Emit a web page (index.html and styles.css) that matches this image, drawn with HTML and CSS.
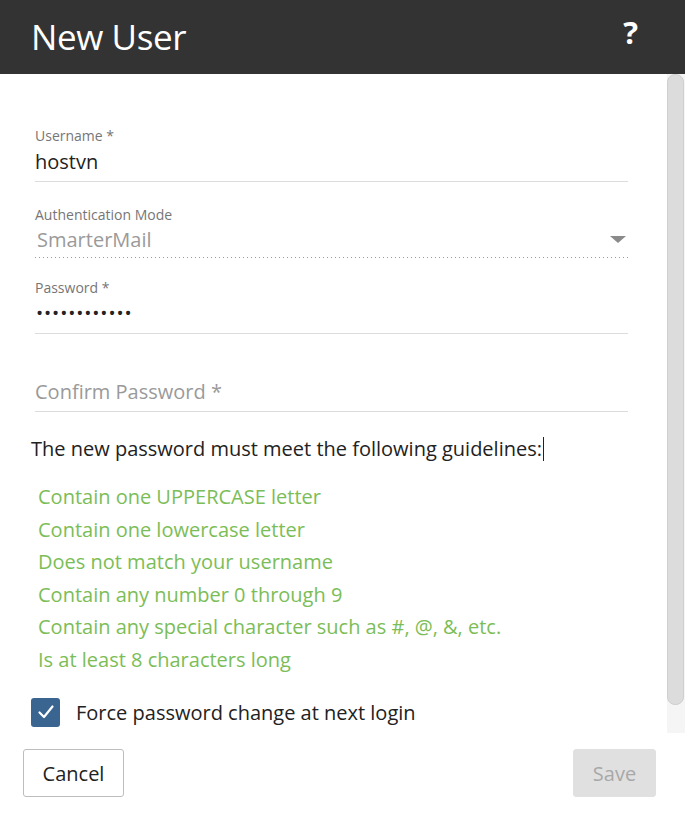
FILE: index.html
```html
<!DOCTYPE html>
<html>
<head>
<meta charset="utf-8">
<link rel="stylesheet" href="styles.css">
</head>
<body>
<div class="modal">
  <header class="modal-header">
    <h1 class="title">New User</h1>
    <span class="help">?</span>
  </header>
  <div class="modal-body">
    <div class="content">
      <div class="field f-user">
        <div class="label">Username *</div>
        <div class="input">hostvn</div>
      </div>
      <div class="field f-auth">
        <div class="label">Authentication Mode</div>
        <div class="select">
          <span class="select-value">SmarterMail</span>
          <span class="caret"></span>
        </div>
      </div>
      <div class="field f-pass">
        <div class="label">Password *</div>
        <div class="input dots">••••••••••••</div>
      </div>
      <div class="field f-confirm">
        <div class="label"></div>
        <div class="input placeholder">Confirm Password *</div>
      </div>
      <p class="guide">The new password must meet the following guidelines:<span class="cursor"></span></p>
      <ul class="rules">
        <li>Contain one UPPERCASE letter</li>
        <li>Contain one lowercase letter</li>
        <li>Does not match your username</li>
        <li>Contain any number 0 through 9</li>
        <li>Contain any special character such as #, @, &amp;, etc.</li>
        <li>Is at least 8 characters long</li>
      </ul>
      <label class="check-row">
        <span class="checkbox">
          <svg width="20" height="20" viewBox="0 0 20 20"><path d="M3.5 10.5 L8 15 L16.5 4.5" fill="none" stroke="#fff" stroke-width="2.2" stroke-linecap="round" stroke-linejoin="round"/></svg>
        </span>
        <span class="check-label">Force password change at next login</span>
      </label>
    </div>
    <div class="scrollbar"><div class="thumb"></div></div>
  </div>
  <footer class="modal-footer">
    <button class="btn btn-cancel">Cancel</button>
    <button class="btn btn-save">Save</button>
  </footer>
</div>
</body>
</html>
```

FILE: styles.css
```css
* { box-sizing: border-box; }
html, body { margin: 0; padding: 0; background: #fff; }
body { font-family: "Open Sans", "Noto Sans", sans-serif; color: #222; }

.modal { width: 685px; height: 822px; display: flex; flex-direction: column; }

.modal-header {
  height: 74px; background: #333333; color: #fff;
  display: flex; align-items: center; justify-content: space-between;
  padding: 0 47px 0 31px;
}
.title { margin: 0; font-weight: 400; font-size: 35px; letter-spacing: -0.4px; margin-top: -1px; }
.help { font-size: 31px; font-weight: 700; margin-top: -10px; }

.modal-body { height: 659px; display: flex; }
.content { flex: 1; padding: 51px 39px 0 35px; }
.scrollbar { width: 18px; background: #f5f5f5; padding-right: 1px; }
.thumb { height: 631px; background: #dcdcdc; border: 1px solid #cfcfcf; border-radius: 8px; }

.label { font-size: 14px; line-height: 22px; height: 18px; color: #767676; }
.input { font-size: 20px; height: 39px; line-height: 38px; border-bottom: 1px solid #dcdcdc; color: #222; }
.dots { font-size: 19px; letter-spacing: 0.9px; padding-left: 1px; line-height: 36px; }
.placeholder { color: #9a9a9a; }
.f-auth { margin-top: 22px; }
.f-pass { margin-top: 19px; }
.f-confirm { margin-top: 21px; }

.select {
  height: 36px; display: flex; align-items: center; justify-content: space-between;
  padding: 0 2px 2px 2px;
  background-image: repeating-linear-gradient(to right, #9a9a9a 0 1.5px, transparent 1.5px 4px);
  background-size: 100% 1px; background-repeat: no-repeat; background-position: left bottom;
}
.select-value { font-size: 20px; color: #9a9a9a; }
.caret { width: 0; height: 0; border-left: 8px solid transparent; border-right: 8px solid transparent; border-top: 7px solid #8a8a8a; }

.guide { margin: 22px 0 0 -4px; font-size: 20px; line-height: 30px; color: #222; }
.cursor { display: inline-block; width: 1px; height: 24px; background: #222; vertical-align: -5px; margin-left: 1px; }

.rules { list-style: none; margin: 17px 0 0 3px; padding: 0; color: #7bbd57; font-size: 20px; }
.rules li { line-height: 32.6px; height: 32.6px; }

.check-row { display: flex; align-items: center; margin: 21px 0 0 -4px; gap: 16px; }
.checkbox { width: 29px; height: 29px; background: #3b6591; border-radius: 3px; display: flex; align-items: center; justify-content: center; }
.check-label { font-size: 20px; color: #222; }

.modal-footer { flex: 1; display: flex; justify-content: space-between; align-items: flex-start; padding: 16px 29px 0 23px; }
.btn { font-family: inherit; font-size: 20px; height: 48px; border-radius: 3px; cursor: pointer; }
.btn-cancel { width: 101px; background: #fff; border: 1px solid #bdbdbd; color: #222; }
.btn-save { width: 83px; background: #e0e0e0; border: 1px solid #e0e0e0; color: #a8a8a8; }
```
